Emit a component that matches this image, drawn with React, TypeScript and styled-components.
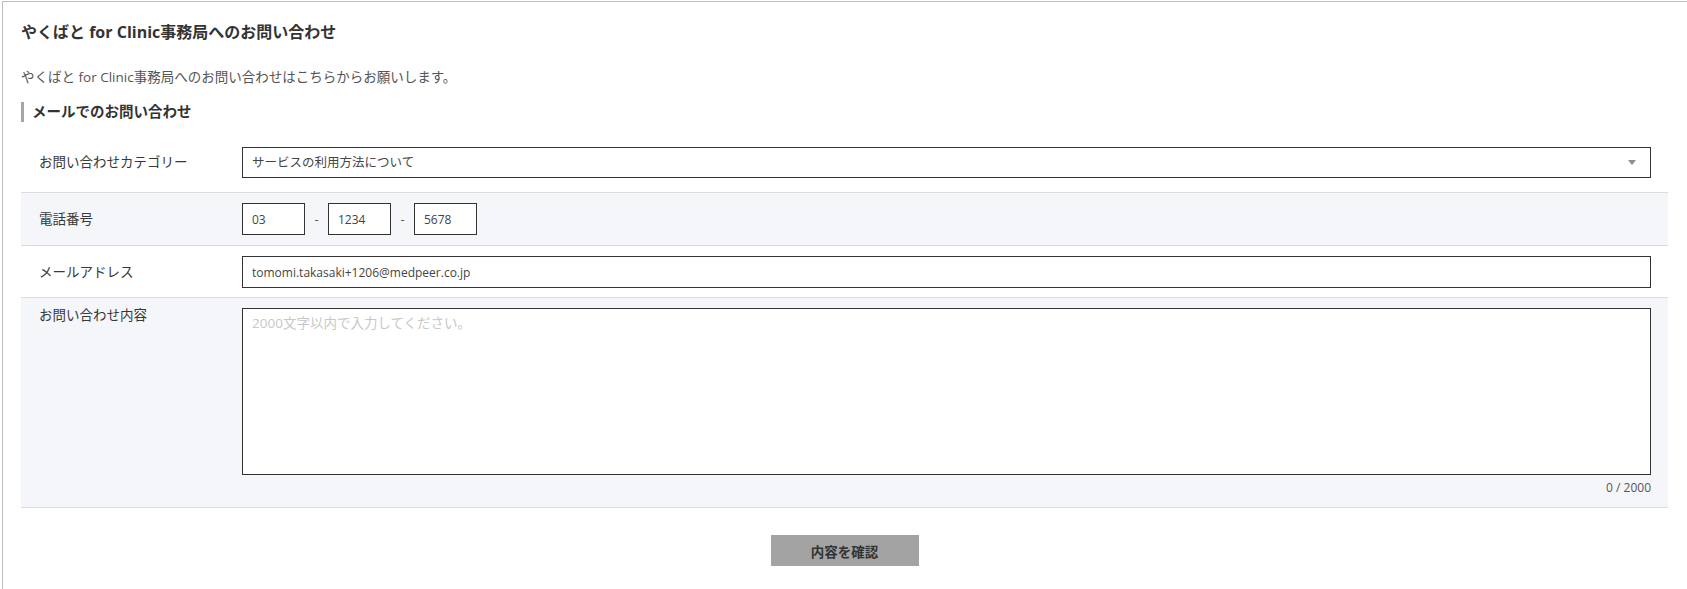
import React from "react";
import styled, { createGlobalStyle } from "styled-components";

const GlobalStyle = createGlobalStyle`
  html, body {
    margin: 0;
    padding: 0;
    background: #ffffff;
  }
  body {
    font-family: "Open Sans", "Noto Sans CJK JP", sans-serif;
    color: #333333;
  }
  * { box-sizing: border-box; }
`;

const Card = styled.div`
  margin: 1px 0 0 2px;
  border-left: 1px solid #bdbdbd;
  border-top: 1px solid #bdbdbd;
  padding: 18px 19px 30px 18px;
`;

const Title = styled.h1`
  margin: 0;
  font-size: 16px;
  line-height: 24px;
  font-weight: 700;
  color: #333333;
`;

const Lead = styled.p`
  margin: 23px 0 0;
  font-size: 13.5px;
  line-height: 20px;
  color: #555555;
`;

const SectionHeading = styled.h2`
  margin: 15px 0 0;
  padding-left: 8px;
  border-left: 3px solid #a6a6a6;
  font-size: 14.5px;
  line-height: 20px;
  font-weight: 700;
  color: #333333;
`;

const Rows = styled.div`
  margin-top: 15px;
`;

const Row = styled.div<{ $shaded?: boolean; $pb?: number }>`
  display: grid;
  grid-template-columns: 203px 1fr;
  padding: 10px 17px ${(p) => p.$pb ?? 10}px 18px;
  border-bottom: 1px solid #dcdcdc;
  background: ${(p) => (p.$shaded ? "#f5f6fa" : "#ffffff")};
`;

const Label = styled.div<{ $top?: boolean }>`
  font-size: 13.5px;
  color: #383838;
  line-height: ${(p) => (p.$top ? "14px" : "31px")};
  align-self: ${(p) => (p.$top ? "start" : "center")};
`;

const SelectWrap = styled.div`
  position: relative;
  &::after {
    content: "";
    position: absolute;
    right: 15px;
    top: 13px;
    border-left: 4px solid transparent;
    border-right: 4px solid transparent;
    border-top: 5px solid #8c8c8c;
    pointer-events: none;
  }
`;

const Select = styled.select`
  appearance: none;
  -webkit-appearance: none;
  width: 100%;
  height: 31px;
  margin: 0;
  padding: 0 9px;
  border: 1px solid #333333;
  border-radius: 0;
  background: #ffffff;
  font-family: inherit;
  font-size: 12.5px;
  color: #444444;
  outline: none;
`;

const TextInput = styled.input<{ $w?: number }>`
  width: ${(p) => (p.$w ? `${p.$w}px` : "100%")};
  height: 32px;
  margin: 0;
  padding: 0 9px;
  border: 1px solid #333333;
  border-radius: 0;
  background: #ffffff;
  font-family: inherit;
  font-size: 12px;
  color: #444444;
  outline: none;
`;

const PhoneGroup = styled.div`
  display: flex;
  align-items: center;
`;

const Dash = styled.span`
  width: 23px;
  text-align: center;
  font-size: 13px;
  color: #555555;
`;

const TextAreaBlock = styled.div`
  display: flex;
  flex-direction: column;
`;

const TextArea = styled.textarea`
  width: 100%;
  height: 167px;
  margin: 0;
  padding: 4px 9px;
  border: 1px solid #333333;
  border-radius: 0;
  background: #ffffff;
  font-family: inherit;
  font-size: 13.5px;
  line-height: 20px;
  color: #444444;
  resize: none;
  outline: none;
  &::placeholder {
    color: #c8c8c8;
  }
`;

const Counter = styled.div`
  margin-top: 5px;
  text-align: right;
  font-size: 12px;
  line-height: 16px;
  color: #555555;
  padding-bottom: 1px;
`;

const Actions = styled.div`
  display: flex;
  justify-content: center;
  margin-top: 27px;
`;

const ConfirmButton = styled.button`
  width: 148px;
  height: 31px;
  border: none;
  border-radius: 0;
  background: #a3a3a3;
  font-family: inherit;
  font-size: 13.5px;
  font-weight: 700;
  color: #333333;
  cursor: default;
`;

export default function App() {
  return (
    <>
      <GlobalStyle />
      <Card>
        <Title>やくばと for Clinic事務局へのお問い合わせ</Title>
        <Lead>やくばと for Clinic事務局へのお問い合わせはこちらからお願いします。</Lead>
        <SectionHeading>メールでのお問い合わせ</SectionHeading>
        <Rows>
          <Row $pb={14}>
            <Label>お問い合わせカテゴリー</Label>
            <SelectWrap>
              <Select defaultValue="usage">
                <option value="usage">サービスの利用方法について</option>
              </Select>
            </SelectWrap>
          </Row>
          <Row $shaded>
            <Label>電話番号</Label>
            <PhoneGroup>
              <TextInput $w={63} defaultValue="03" />
              <Dash>-</Dash>
              <TextInput $w={63} defaultValue="1234" />
              <Dash>-</Dash>
              <TextInput $w={63} defaultValue="5678" />
            </PhoneGroup>
          </Row>
          <Row $pb={9}>
            <Label>メールアドレス</Label>
            <TextInput defaultValue="tomomi.takasaki+1206@medpeer.co.jp" />
          </Row>
          <Row $shaded>
            <Label $top>お問い合わせ内容</Label>
            <TextAreaBlock>
              <TextArea placeholder="2000文字以内で入力してください。" />
              <Counter>0 / 2000</Counter>
            </TextAreaBlock>
          </Row>
        </Rows>
        <Actions>
          <ConfirmButton type="button">内容を確認</ConfirmButton>
        </Actions>
      </Card>
    </>
  );
}
